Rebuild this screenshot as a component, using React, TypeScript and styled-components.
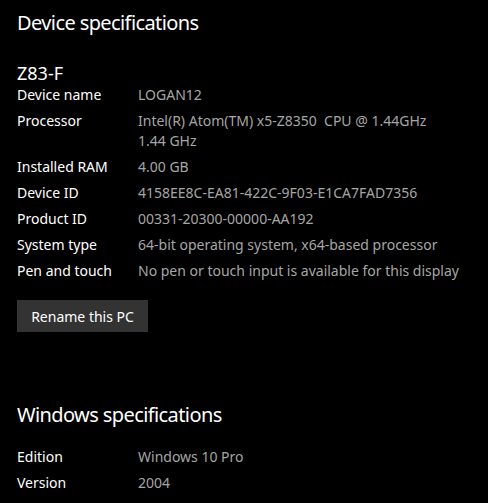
import React from "react";
import styled, { createGlobalStyle } from "styled-components";

const GlobalStyle = createGlobalStyle`
  html, body {
    margin: 0;
    padding: 0;
    background: #000;
  }
  body {
    font-family: "Noto Sans", "Open Sans", sans-serif;
    -webkit-font-smoothing: antialiased;
  }
`;

const Page = styled.main`
  width: 488px;
  height: 503px;
  box-sizing: border-box;
  padding: 9px 0 0 17px;
  background: #000;
  color: #fff;
  overflow: hidden;
`;

const Section = styled.section<{ $gap?: number }>`
  display: flex;
  flex-direction: column;
  margin-top: ${(p) => p.$gap ?? 0}px;
`;

const SectionTitle = styled.h2`
  margin: 0;
  font-size: 20px;
  font-weight: 400;
  line-height: 28px;
  letter-spacing: -0.6px;
  color: #fff;
`;

const ModelName = styled.h3`
  margin: 24px 0 0;
  font-size: 18px;
  font-weight: 400;
  line-height: 24px;
  color: #fff;
`;

const SpecList = styled.dl<{ $top?: number }>`
  display: grid;
  grid-template-columns: 121px 1fr;
  row-gap: 6px;
  margin: ${(p) => p.$top ?? 0}px 0 0;
  font-size: 14px;
  line-height: 20px;
`;

const Label = styled.dt`
  margin: 0;
  color: #fff;
  white-space: nowrap;
`;

const Value = styled.dd`
  margin: 0;
  color: #a6a6a6;
  white-space: pre;
`;

const RenameButton = styled.button`
  align-self: flex-start;
  margin-top: 19px;
  width: 131px;
  height: 32px;
  padding: 0;
  border: none;
  background: #333;
  color: #fff;
  font-family: inherit;
  font-size: 14px;
  cursor: pointer;
`;

type Spec = [string, string];

const device: Spec[] = [
  ["Device name", "LOGAN12"],
  ["Processor", "Intel(R) Atom(TM) x5-Z8350  CPU @ 1.44GHz\n1.44 GHz"],
  ["Installed RAM", "4.00 GB"],
  ["Device ID", "4158EE8C-EA81-422C-9F03-E1CA7FAD7356"],
  ["Product ID", "00331-20300-00000-AA192"],
  ["System type", "64-bit operating system, x64-based processor"],
  ["Pen and touch", "No pen or touch input is available for this display"],
];

const windows: Spec[] = [
  ["Edition", "Windows 10 Pro"],
  ["Version", "2004"],
];

const Specs = ({ items, top }: { items: Spec[]; top?: number }) => (
  <SpecList $top={top}>
    {items.map(([k, v]) => (
      <React.Fragment key={k}>
        <Label>{k}</Label>
        <Value>{v}</Value>
      </React.Fragment>
    ))}
  </SpecList>
);

export default function App() {
  return (
    <>
      <GlobalStyle />
      <Page>
        <Section>
          <SectionTitle>Device specifications</SectionTitle>
          <ModelName>Z83-F</ModelName>
          <Specs items={device} />
          <RenameButton>Rename this PC</RenameButton>
        </Section>
        <Section $gap={69}>
          <SectionTitle>Windows specifications</SectionTitle>
          <Specs items={windows} top={18} />
        </Section>
      </Page>
    </>
  );
}
